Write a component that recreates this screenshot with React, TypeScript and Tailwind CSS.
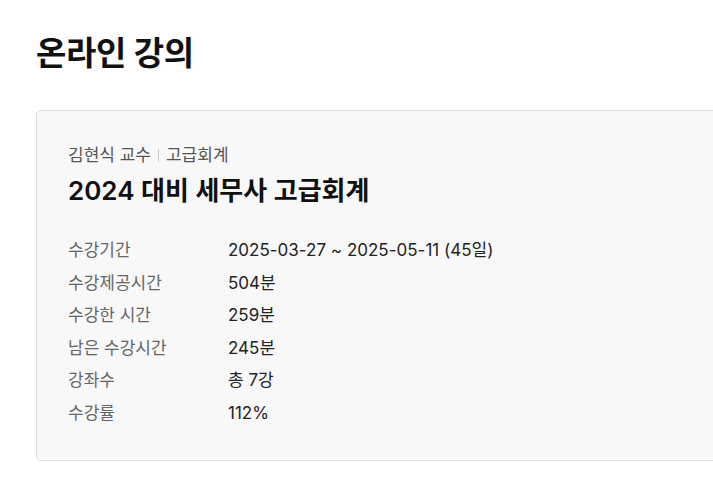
const rows = [
  { label: "수강기간", value: "2025-03-27 ~ 2025-05-11 (45일)" },
  { label: "수강제공시간", value: "504분" },
  { label: "수강한 시간", value: "259분" },
  { label: "남은 수강시간", value: "245분" },
  { label: "강좌수", value: "총 7강" },
  { label: "수강률", value: "112%" },
];

export default function App() {
  return (
    <div className="min-h-screen w-[713px] overflow-hidden bg-white font-['Inter','Noto_Sans_CJK_KR',sans-serif]">
      <div className="pt-[33px] pl-[36px]">
        <h1 className="text-[33px] leading-[40px] font-bold text-[#111] tracking-[-0.3px]">온라인 강의</h1>

        <div className="mt-[37px] w-[720px] rounded-[5px] border border-[#dddddd] bg-[#f8f8f8] pl-[31px] pt-[33px] pb-[30px]">
          <div className="flex items-center text-[17px] leading-[22px] text-[#555]">
            <span>김현식 교수</span>
            <span className="mx-[7px] h-[13px] w-px bg-[#cccccc]" />
            <span>고급회계</span>
          </div>
          <h2 className="mt-[9px] text-[26px] leading-[32px] font-semibold text-[#111]">2024 대비 세무사 고급회계</h2>

          <dl className="mt-[27px]">
            {rows.map((r) => (
              <div key={r.label} className="flex text-[17px] leading-[32.6px]">
                <dt className="w-[160px] text-[#666]">{r.label}</dt>
                <dd className="text-[#222]">{r.value}</dd>
              </div>
            ))}
          </dl>
        </div>
      </div>
    </div>
  );
}
